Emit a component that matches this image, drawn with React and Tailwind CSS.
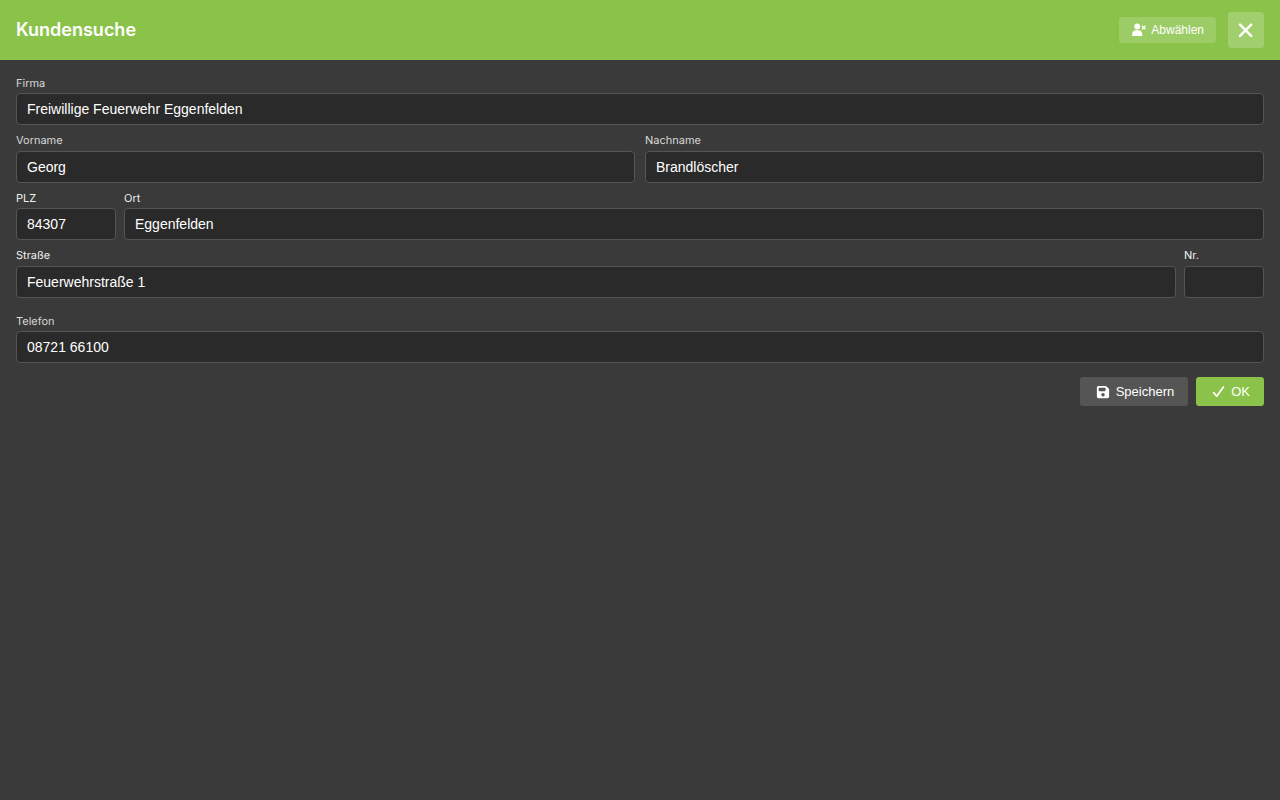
import React from 'react';
import { FaFloppyDisk } from 'react-icons/fa6';

function UserRemoveIcon() {
    return (
        <svg width="16" height="16" viewBox="0 0 16 16" fill="currentColor" aria-hidden="true">
            <circle cx="6.2" cy="4.5" r="2.9" />
            <path d="M1 13.2c0-3 1.7-4.9 4-4.9h2.4c2.3 0 4 1.9 4 4.9 0 .5-.3.8-.8.8H1.8c-.5 0-.8-.3-.8-.8z" />
            <path d="M11.3 4.3l2.8 2.8M14.1 4.3l-2.8 2.8" stroke="currentColor" strokeWidth="1.4" strokeLinecap="round" />
        </svg>
    );
}

function CloseIcon() {
    return (
        <svg width="20" height="20" viewBox="0 0 20 20" fill="none" stroke="currentColor" strokeWidth="2.5" strokeLinecap="round" aria-hidden="true">
            <path d="M4 4.6l11.2 11.2M15.2 4.6L4 15.8" />
        </svg>
    );
}

function CheckIcon() {
    return (
        <svg width="13" height="13" viewBox="0 0 13 13" fill="none" stroke="currentColor" strokeWidth="1.7" strokeLinecap="round" strokeLinejoin="round" aria-hidden="true">
            <path d="M1.6 7.6l3.2 3.6L11.4 2" />
        </svg>
    );
}

function Field({ id, label, value = '', labelColor = 'text-[#d8d8d8]', className = 'gap-1' }) {
    return (
        <div className={`flex flex-col ${className}`}>
            <label htmlFor={id} className={`text-[11px] leading-[14px] [text-rendering:geometricPrecision] ${labelColor}`}>
                {label}
            </label>
            <input
                id={id}
                type="text"
                defaultValue={value}
                className="h-8 w-full min-w-0 rounded border border-[#555555] bg-[#2a2a2a] px-2.5 font-['Liberation_Sans',sans-serif] text-sm text-white outline-none focus:border-[#8bc34a]"
            />
        </div>
    );
}

export default function App() {
    return (
        <div className="min-h-screen bg-[#3a3a3a] font-[Inter,sans-serif]">
            <header className="flex items-center justify-between bg-[#8bc34a] px-4 py-3">
                <h1 className="text-lg font-semibold text-white">Kundensuche</h1>
                <div className="flex items-center gap-3 font-['Liberation_Sans',sans-serif]">
                    <button type="button" className="flex h-[26px] items-center gap-1 rounded-[3px] bg-white/15 px-3 text-xs text-white">
                        <UserRemoveIcon />
                        Abwählen
                    </button>
                    <button type="button" aria-label="Schließen" className="flex size-9 items-center justify-center rounded bg-white/20 text-white">
                        <CloseIcon />
                    </button>
                </div>
            </header>

            <form className="flex flex-col gap-2 px-4 pt-4" onSubmit={(e) => e.preventDefault()}>
                <Field id="firma" label="Firma" value="Freiwillige Feuerwehr Eggenfelden" className="gap-[3px]" />

                <div className="grid grid-cols-2 gap-2.5">
                    <Field id="vorname" label="Vorname" value="Georg" />
                    <Field id="nachname" label="Nachname" value="Brandlöscher" />
                </div>

                <div className="flex gap-2">
                    <Field id="plz" label="PLZ" value="84307" labelColor="text-[#f0f0f0]" className="w-[100px] gap-[3px]" />
                    <Field id="ort" label="Ort" value="Eggenfelden" labelColor="text-[#f0f0f0]" className="flex-1 gap-[3px]" />
                </div>

                <div className="flex gap-2">
                    <Field id="strasse" label="Straße" value="Feuerwehrstraße 1" labelColor="text-[#f0f0f0]" className="flex-1 gap-1" />
                    <Field id="hausnummer" label="Nr." labelColor="text-[#f0f0f0]" className="w-20 gap-1" />
                </div>

                <Field id="telefon" label="Telefon" value="08721 66100" className="mt-2 gap-[3px]" />

                <div className="mt-1.5 flex justify-end gap-2 font-['Liberation_Sans',sans-serif] text-[13px] text-white">
                    <button type="button" className="flex h-[29px] items-center gap-1.5 rounded-[3px] bg-[#555555] pr-3.5 pl-4">
                        <FaFloppyDisk size={14} />
                        Speichern
                    </button>
                    <button type="submit" className="flex h-[29px] items-center gap-1.5 rounded-[3px] bg-[#8bc34a] pr-3.5 pl-4">
                        <CheckIcon />
                        OK
                    </button>
                </div>
            </form>
        </div>
    );
}
